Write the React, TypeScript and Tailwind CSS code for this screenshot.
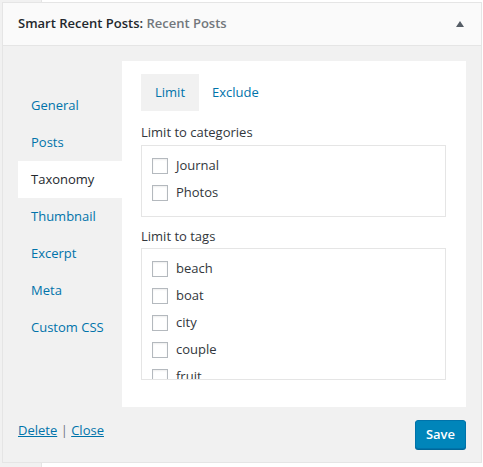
import React from 'react'

const navItems = ['General', 'Posts', 'Taxonomy', 'Thumbnail', 'Excerpt', 'Meta', 'Custom CSS']
const categories = ['Journal', 'Photos']
const tags = ['beach', 'boat', 'city', 'couple', 'fruit']

function Check({ label }: { label: string }) {
  return (
    <label className="flex items-center h-[27px] gap-2 text-[13px] text-[#32373c]">
      <span className="w-4 h-4 border border-[#b4b9be] bg-white shadow-[inset_0_1px_2px_rgba(0,0,0,0.07)] shrink-0" />
      <span>{label}</span>
    </label>
  )
}

export default function App() {
  return (
    <div
      className="w-[483px] h-[467px] bg-white overflow-hidden"
      style={{ fontFamily: '"Open Sans", "Liberation Sans", sans-serif' }}
    >
      {/* page bits around the widget */}
      <div className="flex h-[2px]">
        <div className="w-[42px] bg-[#f1f1f1] border-r border-[#e5e5e5]" />
      </div>

      <div className="flex">
        <div className="w-[2px] bg-[#f1f1f1]" />
        <div className="w-[480px] border border-[#e5e5e5] bg-[#f1f1f1]">
          {/* Header */}
          <div className="h-[43px] flex items-center justify-between bg-[#fafafa] border-b border-[#e5e5e5] pl-[15px] pr-[17px]">
            <h3 className="text-[13px] font-semibold text-[#23282d]">
              Smart Recent Posts: <span className="text-[#72777c]">Recent Posts</span>
            </h3>
            <svg width="8" height="6" viewBox="0 0 8 6">
              <polygon points="4,0 8,6 0,6" fill="#555d66" />
            </svg>
          </div>

          {/* Body */}
          <div className="px-[15px] pt-[15px] pb-[13px]">
            <div className="flex">
              <ul className="w-[104px] pt-[26px]">
                {navItems.map((item) => (
                  <li
                    key={item}
                    className={
                      item === 'Taxonomy'
                        ? 'h-[37px] flex items-center pl-[13px] text-[13px] bg-white text-[#23282d]'
                        : 'h-[37px] flex items-center pl-[13px] text-[13px] text-[#0073aa]'
                    }
                  >
                    {item}
                  </li>
                ))}
              </ul>

              <div className="w-[344px] h-[346px] bg-white pl-[19px] pr-[20px] pt-[13px]">
                <div className="flex">
                  <div className="h-[37px] px-[14px] flex items-center bg-[#f1f1f1] text-[13px] text-[#0073aa]">Limit</div>
                  <div className="h-[37px] px-[13px] flex items-center text-[13px] text-[#0073aa]">Exclude</div>
                </div>

                <p className="mt-[11px] text-[13px] text-[#32373c] leading-[20px]">Limit to categories</p>
                <div className="mt-[3px] border border-[#e5e5e5] pl-[10px] pt-[6px] pb-[10px]">
                  {categories.map((c) => (
                    <Check key={c} label={c} />
                  ))}
                </div>

                <p className="mt-[9px] text-[13px] text-[#32373c] leading-[20px]">Limit to tags</p>
                <div className="mt-[2px] h-[132px] overflow-hidden border border-[#e5e5e5] pl-[10px] pt-[6px]">
                  {tags.map((t) => (
                    <Check key={t} label={t} />
                  ))}
                </div>
              </div>
            </div>

            {/* Footer */}
            <div className="flex items-start justify-between mt-[13px]">
              <div className="text-[13px] pt-[1px]">
                <a className="text-[#0073aa] underline">Delete</a>
                <span className="text-[#72777c]"> | </span>
                <a className="text-[#0073aa] underline">Close</a>
              </div>
              <button className="h-[29px] px-[10px] rounded-[3px] bg-[#0085ba] border border-[#0073aa] shadow-[0_1px_0_#006799] text-white text-[13px] font-semibold">
                Save
              </button>
            </div>
          </div>
        </div>
      </div>

      <div className="flex h-[4px]">
        <div className="w-[42px] bg-[#f1f1f1] border-r border-[#e5e5e5]" />
      </div>
    </div>
  )
}
